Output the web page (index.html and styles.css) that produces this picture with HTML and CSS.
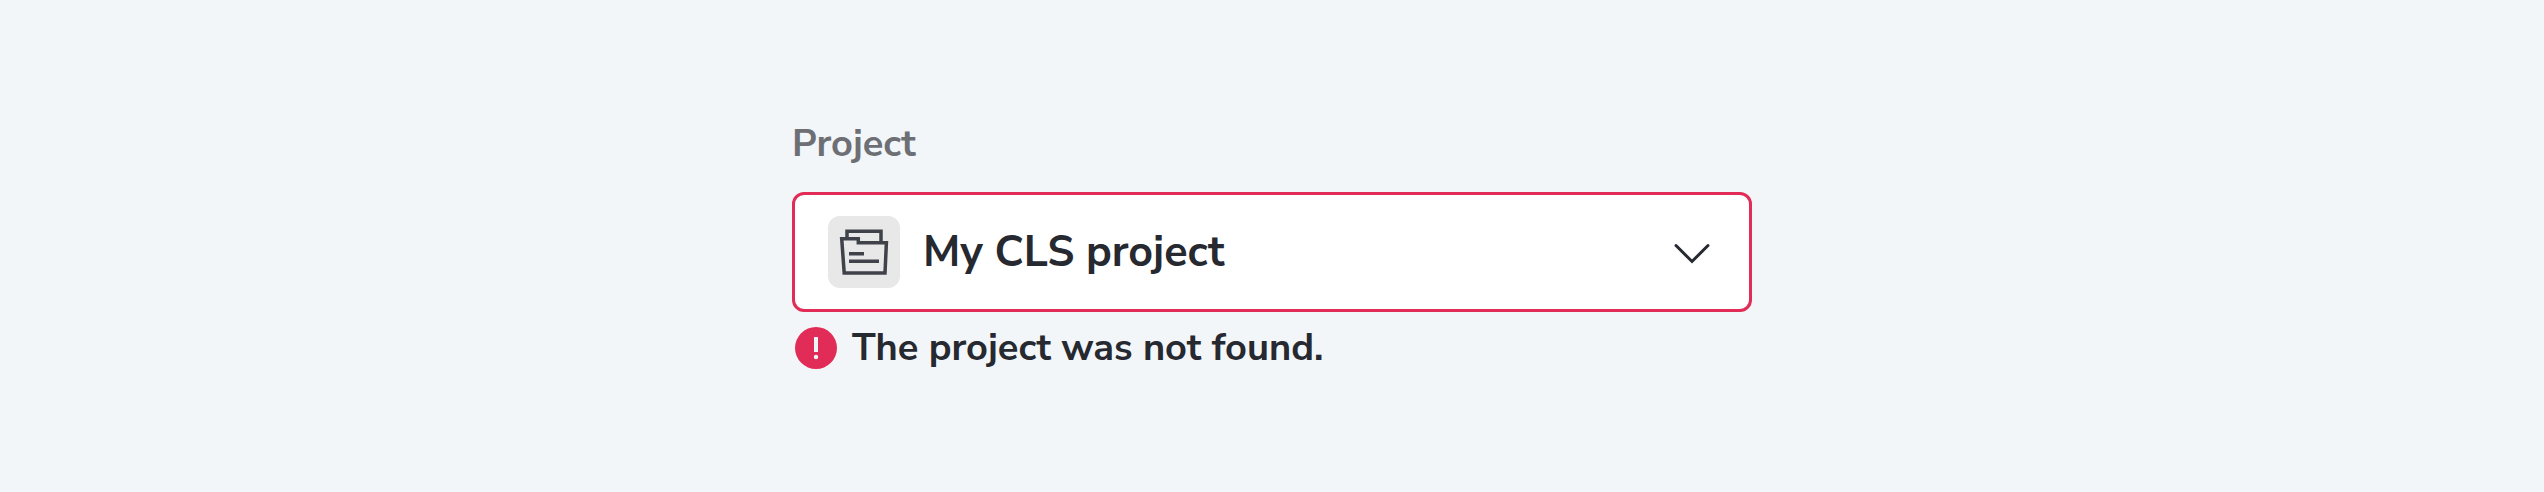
FILE: index.html
```
<!DOCTYPE html>
<html lang="en">
<head>
<meta charset="utf-8">
<meta name="viewport" content="width=device-width, initial-scale=1">
<title>Project</title>
<link rel="stylesheet" href="styles.css">
</head>
<body>
<main class="page">
  <div class="field">
    <label class="field-label" for="project">Project</label>
    <div class="select-wrap">
      <select class="select" id="project" aria-invalid="true" aria-describedby="project-error">
        <option>My CLS project</option>
      </select>
      <span class="project-icon">
        <svg viewBox="0 0 72 72" aria-hidden="true" fill="none" stroke="#3f4349" stroke-width="3.5">
          <path d="M19 22V15.200H53V26"/>
          <path d="M13.700 22.700H30.300V26.700H58.400L57 57H16.200Z"/>
          <path d="M21 37.700H36M21 45.300H51"/>
        </svg>
      </span>
      <svg class="chevron" viewBox="0 0 48 48" aria-hidden="true" fill="none" stroke="#272931" stroke-width="3" stroke-linecap="round">
        <path d="M8 17.500L24 33.500L40 17.500"/>
      </svg>
    </div>
    <p class="error" id="project-error">
      <svg class="error-icon" viewBox="0 0 48 48" aria-hidden="true">
        <circle cx="24" cy="24" r="21" fill="#e12c57"/>
        <path d="M22 13H26V28H22Z" fill="#f1f5f8"/>
        <circle cx="24" cy="33" r="2.200" fill="#f1f5f8"/>
      </svg>
      <span>The project was not found.</span>
    </p>
  </div>
</main>
</body>
</html>
```
FILE: styles.css
```
* {
  box-sizing: border-box;
}

body {
  margin: 0;
  background: #f2f6f9;
  color: #272931;
  font-family: "Nunito Sans", "Nunito", "Open Sans", sans-serif;
  font-weight: 700;
}

.page {
  display: flex;
  justify-content: center;
  padding: 116px 24px;
}

.field {
  display: flex;
  flex-direction: column;
  width: 100%;
  max-width: 960px;
}

.field-label {
  margin-bottom: 20px;
  color: #6e6f74;
  font-size: 38px;
  line-height: 56px;
}

.select-wrap {
  position: relative;
}

.select {
  display: block;
  width: 100%;
  height: 120px;
  padding: 0 96px 0 128px;
  border: 3px solid #e12c57;
  border-radius: 12px;
  appearance: none;
  background: #fff;
  color: inherit;
  font: inherit;
  font-size: 43px;
}

.project-icon {
  position: absolute;
  top: 24px;
  left: 36px;
  width: 72px;
  height: 72px;
  border-radius: 12px;
  background: #e8e8e8;
  pointer-events: none;
}

.project-icon svg {
  display: block;
}

.chevron {
  position: absolute;
  top: 36px;
  right: 36px;
  width: 48px;
  height: 48px;
  pointer-events: none;
}

.error {
  display: flex;
  align-items: center;
  gap: 12px;
  margin: 8px 0 0;
  font-size: 38px;
  line-height: 56px;
}

.error-icon {
  flex: none;
  width: 48px;
  height: 48px;
}
```
